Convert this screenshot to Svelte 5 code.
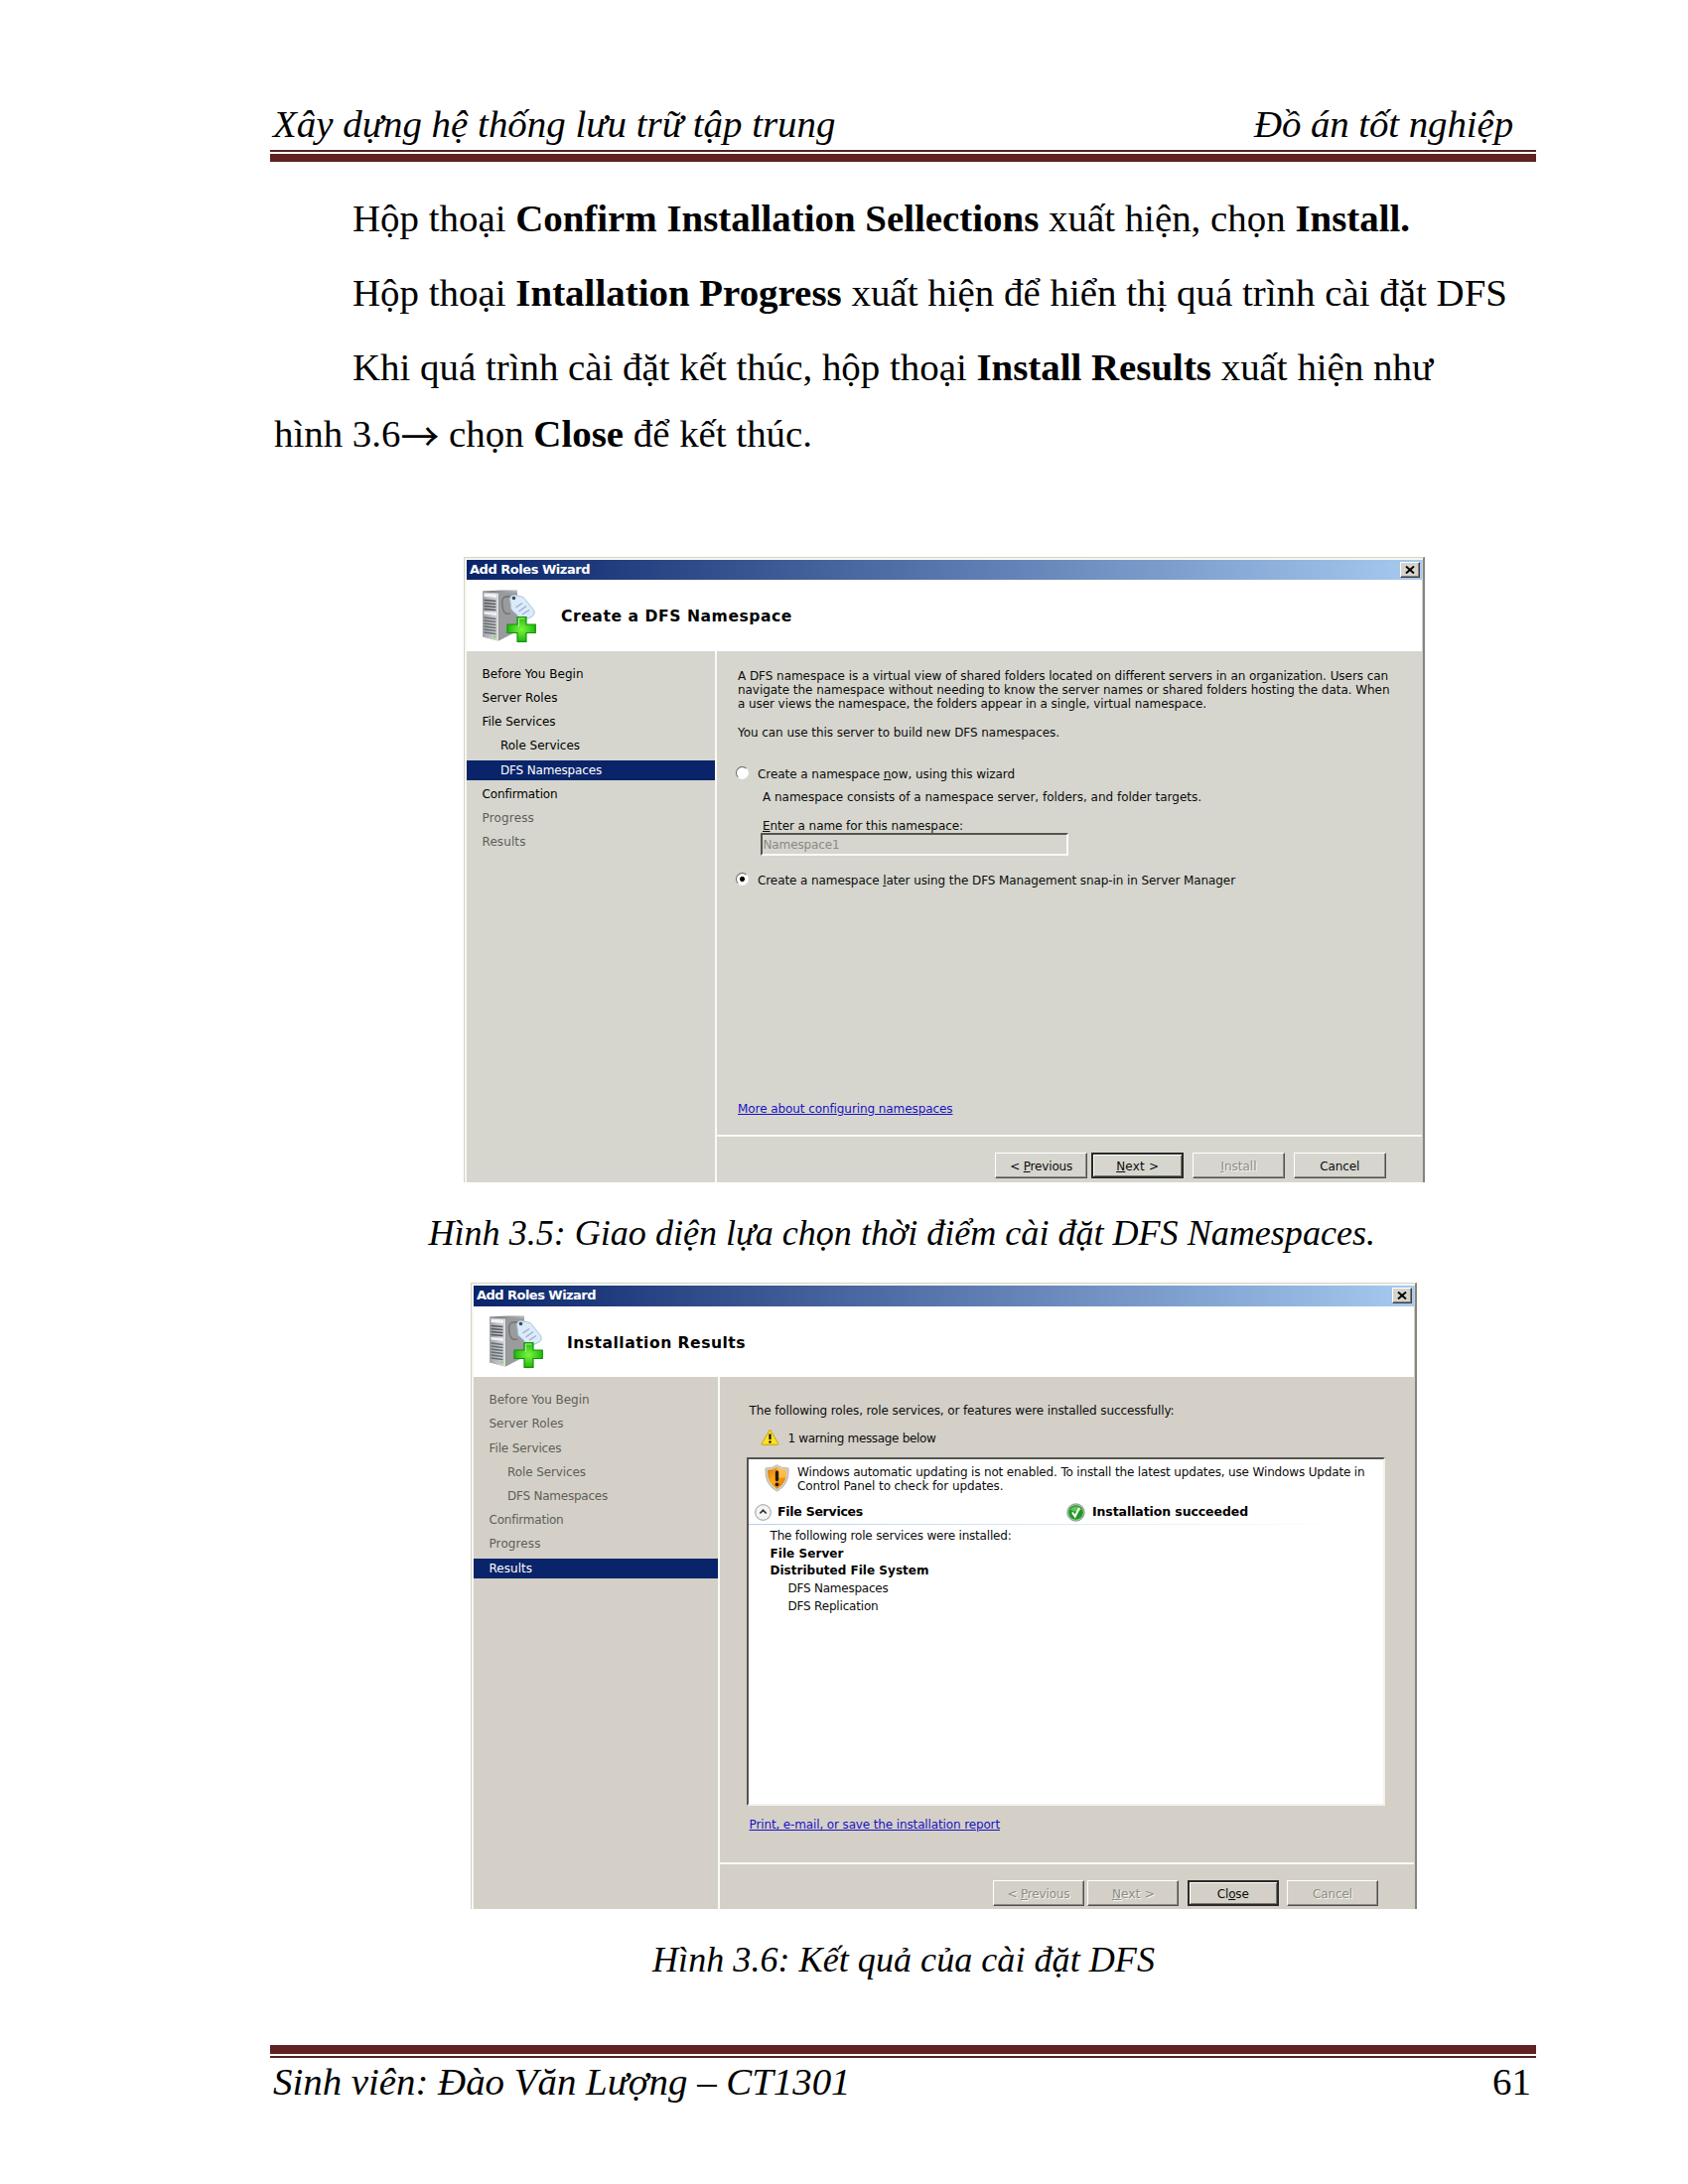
<script>
  const stepsA = [
    { label: 'Before You Begin', width: 102 },
    { label: 'Server Roles', width: 76 },
    { label: 'File Services', width: 74 },
    { label: 'Role Services', width: 80, sub: true },
    { label: 'DFS Namespaces', width: 102, sub: true, current: true },
    { label: 'Confirmation', width: 76 },
    { label: 'Progress', width: 52.5, off: true },
    { label: 'Results', width: 44, off: true }
  ];
  const stepsB = [
    { label: 'Before You Begin', width: 101, off: true },
    { label: 'Server Roles', width: 75, off: true },
    { label: 'File Services', width: 73, off: true },
    { label: 'Role Services', width: 79, sub: true, off: true },
    { label: 'DFS Namespaces', width: 101, sub: true, off: true },
    { label: 'Confirmation', width: 75, off: true },
    { label: 'Progress', width: 52, off: true },
    { label: 'Results', width: 43.5, current: true }
  ];

  // Justifies one line of text to a set width by tracking its letters.
  function fit(node, width) {
    const natural = node.getBoundingClientRect().width;
    const count = node.textContent.length;
    node.style.letterSpacing = `${(width - natural) / count}px`;
  }
</script>

{#snippet serverIcon()}
  <svg class="server" viewBox="0 0 55 53" aria-hidden="true">
    <defs>
      <linearGradient id="side" x1="0" x2="1"><stop offset="0" stop-color="#6d7073" /><stop offset="1" stop-color="#b4b6b8" /></linearGradient>
      <linearGradient id="face" x1="0" x2="1"><stop offset="0" stop-color="#9fa3a8" /><stop offset="1" stop-color="#d3d6da" /></linearGradient>
      <radialGradient id="plus"><stop offset="0" stop-color="#7df542" /><stop offset="1" stop-color="#22b80d" /></radialGradient>
    </defs>
    <path d="M1 1.500 L20 .5 H36 V42 L17 51.500 L1 47Z" fill="url(#side)" />
    <path d="M18 3 H36 V41 L18 51Z" fill="#999b9d" />
    <path d="M1 2 L16 3.500 V51.500 L1 47.500Z" fill="url(#face)" />
    <path d="M2.500 3.500 L15 4.500 V8 L2.500 7Z" fill="#f1f3f5" />
    <path d="M2.500 10.500 L14.500 11.500M2.500 13.500 L14.500 14.500M2.500 16.500 L14.500 17.500M2.500 19.500 L14.500 20.500" stroke="#55595e" stroke-width="1.700" />
    <path d="M2.500 22 L15 23 V26 L2.500 24.500Z" fill="#eef0f3" />
    <path d="M2.500 28 L14.500 29.500M2.500 31 L14.500 32.500M2.500 34 L14.500 35.500M2.500 37 L14.500 38.500M2.500 40 L14.500 41.500M2.500 43 L14.500 44.500" stroke="#686d73" stroke-width="1.500" />
    <path d="M16.500 3.500 V51.500" stroke="#e1e2e3" stroke-width="1" />
    <circle cx="13.500" cy="47.500" r="1.200" fill="#75df45" />
    <path d="M29 7 C21 6 20 9 21 17 C22 24 25 25 29 24" fill="none" stroke="#777" stroke-width="1.600" />
    <path d="M28.500 9 Q29 5.500 33 5.500 L42 7.500 L53 21 Q54 25 51 27 L42 31 L30 20Z" fill="#dcebfa" stroke="#a9c3dd" stroke-width="1" />
    <circle cx="32.500" cy="8.500" r="1.800" fill="#3f4851" />
    <path d="M34.500 18 L41 13.500M37.500 22 L45 16.500M41 25 L48 20.500" stroke="#9aaed0" stroke-width="1.400" />
    <path d="M36 27.500 H45 V35 H54.300 V43.500 H45 V52.300 H36 V43.500 H26 V35 H36Z" fill="url(#plus)" stroke="#15940a" stroke-width="1.200" />
    <path d="M37.500 37 V29 H43.500" fill="none" stroke="#a6f58a" stroke-width="1.200" />
  </svg>
{/snippet}

{#snippet titleBar(width)}
  <div class="titlebar">
    <span use:fit={width}>Add Roles Wizard</span>
    <span class="close"><svg viewBox="0 0 10 8"><path d="M1 0.500 L9 7.500M9 0.500 L1 7.500" stroke="#000" stroke-width="1.900" /></svg></span>
  </div>
{/snippet}

{#snippet steps(list)}
  <nav class="steps">
    {#each list as step}
      <div class="step" class:sub={step.sub} class:off={step.off} class:current={step.current}>
        <span use:fit={step.width}>{step.label}</span>
      </div>
    {/each}
  </nav>
{/snippet}

<main class="page">
  <header class="running">
    <span use:fit={566.500}>Xây dựng hệ thống lưu trữ tập trung</span>
    <span use:fit={261}>Đồ án tốt nghiệp</span>
  </header>
  <div class="rule top"></div>

  <p class="text first"><span use:fit={1065}>Hộp thoại <b>Confirm Installation Sellections</b> xuất hiện, chọn <b>Install.</b></span></p>
  <p class="text"><span use:fit={1163}>Hộp thoại <b>Intallation Progress</b> xuất hiện để hiển thị quá trình cài đặt DFS</span></p>
  <p class="text"><span use:fit={1088}>Khi quá trình cài đặt kết thúc, hộp thoại <b>Install Results</b> xuất hiện như</span></p>
  <p class="text cont"><span use:fit={542}>hình 3.6<i class="arrow">→</i> chọn <b>Close</b> để kết thúc.</span></p>

  <section class="dialog one">
    {@render titleBar(121)}
    <div class="banner">{@render serverIcon()}<h2><span use:fit={233}>Create a DFS Namespace</span></h2></div>
    <div class="body">
      {@render steps(stepsA)}
      <div class="pane">
        <div class="content">
          <p><span use:fit={655}>A DFS namespace is a virtual view of shared folders located on different servers in an organization. Users can</span></p>
          <p><span use:fit={656.5}>navigate the namespace without needing to know the server names or shared folders hosting the data. When</span></p>
          <p><span use:fit={472}>a user views the namespace, the folders appear in a single, virtual namespace.</span></p>
          <p class="server-note"><span use:fit={324}>You can use this server to build new DFS namespaces.</span></p>
          <div class="radio now"><i class="dot"></i><span use:fit={259}>Create a namespace <u>n</u>ow, using this wizard</span></div>
          <p class="consists"><span use:fit={442}>A namespace consists of a namespace server, folders, and folder targets.</span></p>
          <p class="enter"><span use:fit={202}><u>E</u>nter a name for this namespace:</span></p>
          <div class="field"><span use:fit={77}>Namespace1</span></div>
          <div class="radio later"><i class="dot on"></i><span use:fit={481}>Create a namespace <u>l</u>ater using the DFS Management snap-in in Server Manager</span></div>
          <p class="link"><span use:fit={216.500}>More about configuring namespaces</span></p>
        </div>
        <footer class="buttons">
          <div class="btn"><span use:fit={63}>&lt; <u>P</u>revious</span></div>
          <div class="btn default"><span use:fit={43}><u>N</u>ext &gt;</span></div>
          <div class="btn disabled"><span use:fit={36}><u>I</u>nstall</span></div>
          <div class="btn"><span use:fit={40}>Cancel</span></div>
        </footer>
      </div>
    </div>
  </section>

  <p class="caption c1"><span use:fit={953.500}>Hình 3.5: Giao diện lựa chọn thời điểm cài đặt DFS Namespaces.</span></p>

  <section class="dialog two">
    {@render titleBar(120)}
    <div class="banner">{@render serverIcon()}<h2><span use:fit={180}>Installation Results</span></h2></div>
    <div class="body">
      {@render steps(stepsB)}
      <div class="pane">
        <div class="content">
          <p><span use:fit={428}>The following roles, role services, or features were installed successfully:</span></p>
          <div class="warning">
            <svg viewBox="0 0 19 17"><path d="M9.500 1 L18 15.500 Q18 16.300 17 16.300 H2 Q1 16.300 1 15.500Z" fill="#ffe01e" stroke="#c9a20c" stroke-linejoin="round" /><path d="M9.500 5.500 V11" stroke="#111" stroke-width="2.200" /><circle cx="9.500" cy="13.500" r="1.200" fill="#111" /></svg>
            <span use:fit={149}>1 warning message below</span>
          </div>
          <div class="results">
            <div class="update">
              <svg viewBox="0 0 25 28">
                <defs><linearGradient id="shield" x1="0" y1="0" x2="1" y2="1"><stop offset="0" stop-color="#d97709" /><stop offset=".45" stop-color="#ffad22" /><stop offset="1" stop-color="#d36a00" /></linearGradient></defs>
                <path d="M12.500 .8 Q17 4.200 24 4 Q25.500 20 12.500 27.200 Q-.5 20 1 4 Q8 4.200 12.500 .8Z" fill="#d6d3c8" stroke="#aaa69a" stroke-width=".8" />
                <path d="M12.500 3 Q17 5.800 22 6 Q23 18.500 12.500 25 Q2 18.500 3 6 Q8 5.800 12.500 3Z" fill="url(#shield)" />
                <path d="M12.500 3 Q17 5.800 22 6 Q22.400 10 21.500 13.500 H12.500Z" fill="#ffc95c" opacity=".7" />
                <path d="M12.500 8 V15.500" stroke="#2a1a08" stroke-width="3.400" stroke-linecap="round" /><circle cx="12.500" cy="20.300" r="1.900" fill="#2a1a08" />
              </svg>
              <div>
                <p><span use:fit={571.500}>Windows automatic updating is not enabled. To install the latest updates, use Windows Update in</span></p>
                <p><span use:fit={207.500}>Control Panel to check for updates.</span></p>
              </div>
            </div>
            <div class="group">
              <svg class="chev" viewBox="0 0 17 17"><circle cx="8.500" cy="8.500" r="7.800" fill="#f4f4f4" stroke="#999" /><path d="M5.300 9.500 L8.500 6.300 L11.700 9.500" fill="none" stroke="#333" stroke-width="1.700" /></svg>
              <strong class="role"><span use:fit={86}>File Services</span></strong>
              <svg class="check" viewBox="0 0 19 19"><circle cx="9.500" cy="9.500" r="8.700" fill="#b9c4b6" stroke="#8c9a8a" /><circle cx="9.500" cy="9.500" r="7.300" fill="#1f9a24" /><path d="M4 7 A6 6 0 0 1 15 7 Q9 10 4 7" fill="#63c45d" /><path d="M6 9.500 L8.700 13.500 L13 5" fill="none" stroke="#fff" stroke-width="2" /></svg>
              <strong><span use:fit={157}>Installation succeeded</span></strong>
            </div>
            <div class="hairline"></div>
            <div class="list">
              <p><span use:fit={243}>The following role services were installed:</span></p>
              <p><b><span use:fit={74}>File Server</span></b></p>
              <p><b><span use:fit={160}>Distributed File System</span></b></p>
              <p class="leaf"><span use:fit={101}>DFS Namespaces</span></p>
              <p class="leaf"><span use:fit={91}>DFS Replication</span></p>
            </div>
          </div>
          <p class="link"><span use:fit={252.500}>Print, e-mail, or save the installation report</span></p>
        </div>
        <footer class="buttons">
          <div class="btn disabled"><span use:fit={63}>&lt; <u>P</u>revious</span></div>
          <div class="btn disabled"><span use:fit={43}><u>N</u>ext &gt;</span></div>
          <div class="btn default"><span use:fit={32}>Cl<u>o</u>se</span></div>
          <div class="btn disabled"><span use:fit={40}>Cancel</span></div>
        </footer>
      </div>
    </div>
  </section>

  <p class="caption c2"><span use:fit={506}>Hình 3.6: Kết quả của cài đặt DFS</span></p>

  <div class="rule bottom"></div>
  <footer class="running foot">
    <span use:fit={581.500}>Sinh viên: Đào Văn Lượng – CT1301</span>
    <span class="num">61</span>
  </footer>
</main>

<style>
  :global(body) { margin: 0; background: #fff; }
  .page {
    box-sizing: border-box;
    width: 1700px;
    height: 2200px;
    padding: 101px 153px 0 272px;
    overflow: hidden;
    background: #fff;
    color: #000;
    font: 38.9px/48px "Liberation Serif", serif;
  }
  p, h2 { margin: 0; }
  span { display: inline-block; white-space: nowrap; }
  b span { font-weight: bold; }
  u { text-underline-offset: 1px; text-decoration-thickness: 1px; }

  .running {
    display: flex;
    justify-content: space-between;
    height: 48px;
    padding: 0 23px 0 3px;
    font-style: italic;
  }
  .rule { box-sizing: border-box; background: #fff; }
  .rule.top { height: 12px; margin-top: 2px; border-top: 2px solid #552425; border-bottom: 8px solid #602322; }
  .rule.bottom { height: 13px; margin-top: 63.5px; border-top: 9px solid #602322; border-bottom: 2px solid #552425; }
  .foot { padding-right: 5px; }
  .num { font-style: normal; }

  .text { height: 48px; margin-top: 27.2px; padding-left: 83px; }
  .text.first { margin-top: 32.6px; }
  .text.cont { margin-top: 19.2px; padding-left: 4px; }
  .arrow { font-family: "Noto Sans CJK JP", sans-serif; font-style: normal; line-height: 0; vertical-align: -4px; }

  .caption { height: 44px; font-size: 36.1px; line-height: 44px; font-style: italic; }
  .c1 { margin-top: 28.8px; padding-left: 159.5px; }
  .c2 { margin-top: 29.5px; padding-left: 385px; }

  .dialog {
    box-sizing: border-box;
    display: flex;
    flex-direction: column;
    border-top: 1px solid #d5d2c6;
    border-left: 1px solid #d5d2c6;
    border-right: 2px solid #85857f;
    box-shadow: inset 2px 2px #f6f6f2, inset -1px 0 #d0d0c9;
    padding: 2px 1px 0 2px;
    color: #0c0c0c;
    font: 12px/14.3px "DejaVu Sans", sans-serif;
  }
  .one { width: 968px; height: 630px; margin: 99.6px 0 0 195px; background: #d6d6ce; }
  .two { width: 953px; height: 630.500px; margin: 28.7px 0 0 202px; background: #d4d0c8; }

  .titlebar {
    box-sizing: border-box;
    flex: none;
    display: flex;
    align-items: center;
    justify-content: space-between;
    height: 20.5px;
    padding: 0 2px 0 3px;
    background: linear-gradient(90deg, #0a246a, #a6caf0);
    color: #fff;
    font-weight: bold;
    font-size: 13px;
  }
  .close {
    box-sizing: border-box;
    display: flex;
    align-items: center;
    justify-content: center;
    width: 20px;
    height: 16px;
    background: #d6d3cb;
    border: 1px solid;
    border-color: #fff #404040 #404040 #fff;
    box-shadow: inset -1px -1px #808080;
  }
  .close svg { width: 10px; height: 8px; }

  .banner {
    box-sizing: border-box;
    flex: none;
    display: flex;
    height: 71.5px;
    padding: 9.500px 0 0 15px;
    background: #fff;
  }
  .server { width: 55px; height: 53px; }
  h2 { margin: 15.500px 0 0 25px; color: #000; font-size: 15.6px; line-height: 24px; }
  .two h2 { margin-left: 24px; }

  .body { flex: 1; display: flex; min-height: 0; }
  .steps { box-sizing: border-box; width: 249.5px; padding-top: 13px; color: #000; }
  .two .steps { width: 245.5px; }
  .step { height: 20.5px; margin-bottom: 3.7px; padding-left: 15.5px; line-height: 20.500px; }
  .step.sub { padding-left: 34px; }
  .step.off { color: #5e5e58; }
  .step.current { background: #0a246a; color: #fff; }

  .pane { flex: 1; display: flex; flex-direction: column; border-left: 2.5px solid #fafaf6; }
  .content { padding: 18px 0 0 21.500px; }
  .content p { height: 14.3px; }
  .content .server-note { margin-top: 14.4px; }
  .radio { display: flex; height: 14.3px; gap: 9px; margin-left: -2px; }
  .now { margin-top: 27.7px; }
  .later { margin-top: 17.7px; }
  .dot {
    box-sizing: border-box;
    width: 13px;
    height: 13px;
    margin-top: -1px;
    border: 1.500px solid;
    border-color: #66665f #fafaf6 #fafaf6 #66665f;
    border-radius: 50%;
    background: #fff;
  }
  .dot.on { background: radial-gradient(circle, #000 2.200px, #fff 2.800px); }
  .content .consists { margin: 8.7px 0 0 25px; }
  .content .enter { margin: 14.4px 0 0 25px; }
  .field {
    box-sizing: border-box;
    width: 310px;
    height: 23px;
    margin-left: 22.500px;
    padding: 1px 0 0 1px;
    border: 2px solid;
    border-color: #55554f #fafaf6 #fafaf6 #55554f;
    color: #8a8a84;
    line-height: 18px;
  }
  .content .link { margin-top: 215.700px; color: #1a12c4; }
  .link span { text-decoration: underline; text-underline-offset: 1px; text-decoration-thickness: 1px; }

  .buttons {
    display: flex;
    justify-content: flex-end;
    margin-top: auto;
    box-sizing: border-box;
    border-top: 2px solid #fafaf6;
  }
  .one .buttons { height: 47.5px; padding: 15.5px 36px 0 0; }
  .btn {
    box-sizing: border-box;
    width: 93.5px;
    height: 26px;
    border: 1px solid;
    border-color: #fff #505050 #505050 #fff;
    box-shadow: inset -1px -1px #8a8a84;
    line-height: 26px;
    text-align: center;
  }
  .btn + .btn { margin-left: 8.3px; }
  .btn:nth-child(2) { margin-left: 3.500px; }
  .btn.default { border: 2px solid #2a2a2a; box-shadow: inset 1px 1px #fff, inset -1px -1px #77776f; line-height: 24px; }
  .btn.disabled { color: #8d8d86; text-shadow: 1px 1px #f7f7f3; }
  .two .btn { width: 92px; }

  .two .content { padding: 27px 0 0 30px; }
  .warning { display: flex; align-items: center; height: 17px; margin: 11.7px 0 0 11px; line-height: 18px; }
  .warning svg { width: 19px; height: 17px; margin: -2px 9px 0 0; }
  .results {
    box-sizing: border-box;
    width: 643px;
    height: 351.5px;
    margin: 10.5px 0 0 -2.5px;
    padding-top: 6.2px;
    border: 2px solid;
    border-color: #55554f #f3f1ec #f3f1ec #55554f;
    background: #fff;
  }
  .update { display: flex; padding-left: 16px; height: 28.6px; }
  .update svg { width: 25px; height: 28px; margin: -1px 8px 0 0; }
  .group { display: flex; align-items: center; height: 20px; margin-top: 8.7px; padding-left: 6px; color: #000; font-size: 12.5px; line-height: 20px; }
  .chev { width: 17px; height: 17px; margin-right: 6px; }
  .role { width: 291px; }
  .check { width: 19px; height: 19px; margin-right: 7px; }
  .hairline { height: 1px; margin-top: 2px; background: linear-gradient(90deg, #b7d2ee, #fff 95%); }
  .list { margin-top: 3px; padding-left: 21.5px; line-height: 17.6px; }
  .list p { height: 17.6px; }
  .list b { color: #000; }
  .list .leaf { padding-left: 18px; }
  .two .content .link { margin-top: 11.7px; }
  .two .buttons { height: 47px; padding: 16px 36px 0 0; }
</style>
